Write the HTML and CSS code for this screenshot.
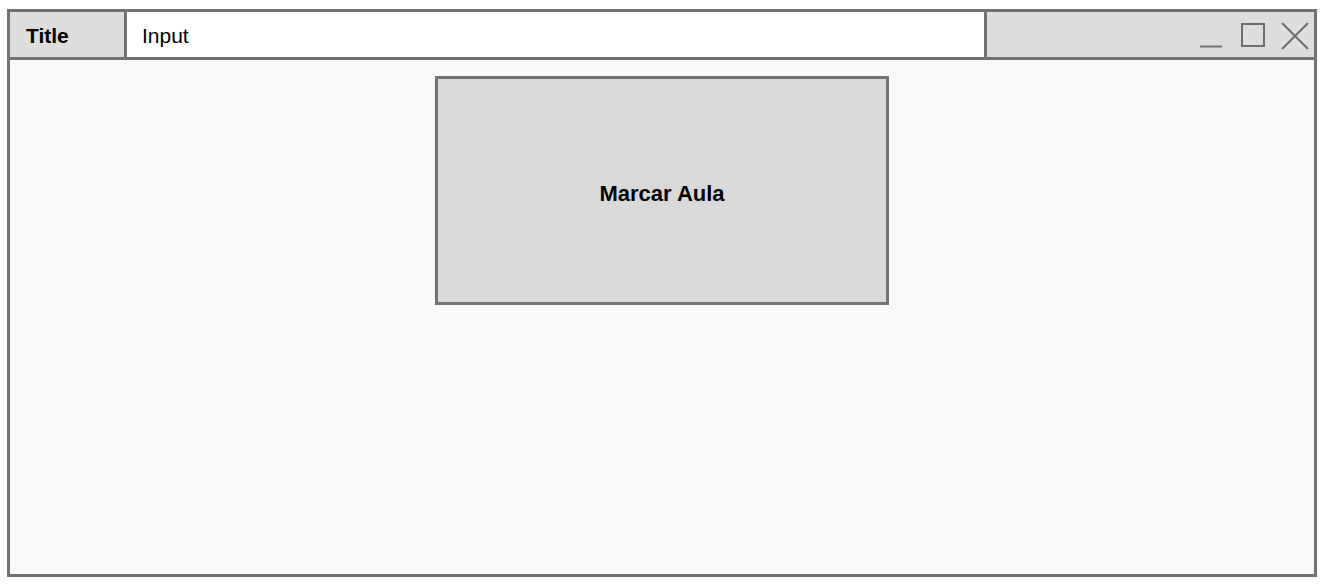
FILE: index.html
```html
<!DOCTYPE html>
<html lang="pt-br">
<head>
    <meta charset="UTF-8">
    <title>Marcar Aula</title>
    <link rel="stylesheet" href="styles.css">
</head>
<body>
    <div class="window">
        <div class="titlebar">
            <div class="title">Title</div>
            <div class="input">Input</div>
            <div class="controls">
                <svg width="112" height="30" viewBox="0 0 112 30">
                    <!-- minimizar -->
                    <line x1="4" y1="26.5" x2="26" y2="26.5" stroke="#6e6e6e" stroke-width="2"/>
                    <!-- maximizar -->
                    <rect x="46" y="4" width="22" height="22" fill="none" stroke="#6e6e6e" stroke-width="2"/>
                    <!-- fechar -->
                    <path d="M86 3 L112 29 M112 3 L86 29" stroke="#6e6e6e" stroke-width="2" fill="none"/>
                </svg>
            </div>
        </div>
        <main class="content">
            <div class="big-button">Marcar Aula</div>
        </main>
    </div>
</body>
</html>
```

FILE: styles.css
```css
body {
    margin: 0;
    padding: 9px 12px 8px 7px;
    background-color: #ffffff;
    font-family: 'Liberation Sans', Arial, sans-serif;
    color: #000;
}
.window {
    height: 568px;
    box-sizing: border-box;
    border: 3px solid #727272;
    display: flex;
    flex-direction: column;
    background-color: #f9f9f9;
}
.titlebar {
    display: flex;
    height: 48px;
    box-sizing: border-box;
    border-bottom: 3px solid #727272;
}
.title {
    width: 117px;
    box-sizing: border-box;
    border-right: 3px solid #727272;
    background-color: #dddddd;
    font-weight: bold;
    font-size: 21px;
    padding-left: 16px;
    padding-top: 2px;
    display: flex;
    align-items: center;
}
.input {
    width: 860px;
    box-sizing: border-box;
    border-right: 3px solid #727272;
    background-color: #ffffff;
    font-size: 21px;
    padding-left: 15px;
    padding-top: 2px;
    display: flex;
    align-items: center;
}
.controls {
    flex: 1;
    background-color: #dddddd;
    display: flex;
    justify-content: flex-end;
    align-items: center;
    padding-right: 6px;
}
.controls svg {
    display: block;
    overflow: visible;
}
.content {
    flex: 1;
    display: flex;
    justify-content: center;
    align-items: flex-start;
    padding-top: 16px;
}
.big-button {
    width: 454px;
    height: 229px;
    box-sizing: border-box;
    border: 3px solid #727272;
    background-color: #d9d9d9;
    font-weight: bold;
    font-size: 22px;
    display: flex;
    justify-content: center;
    align-items: center;
    padding-top: 7px;
}
```
